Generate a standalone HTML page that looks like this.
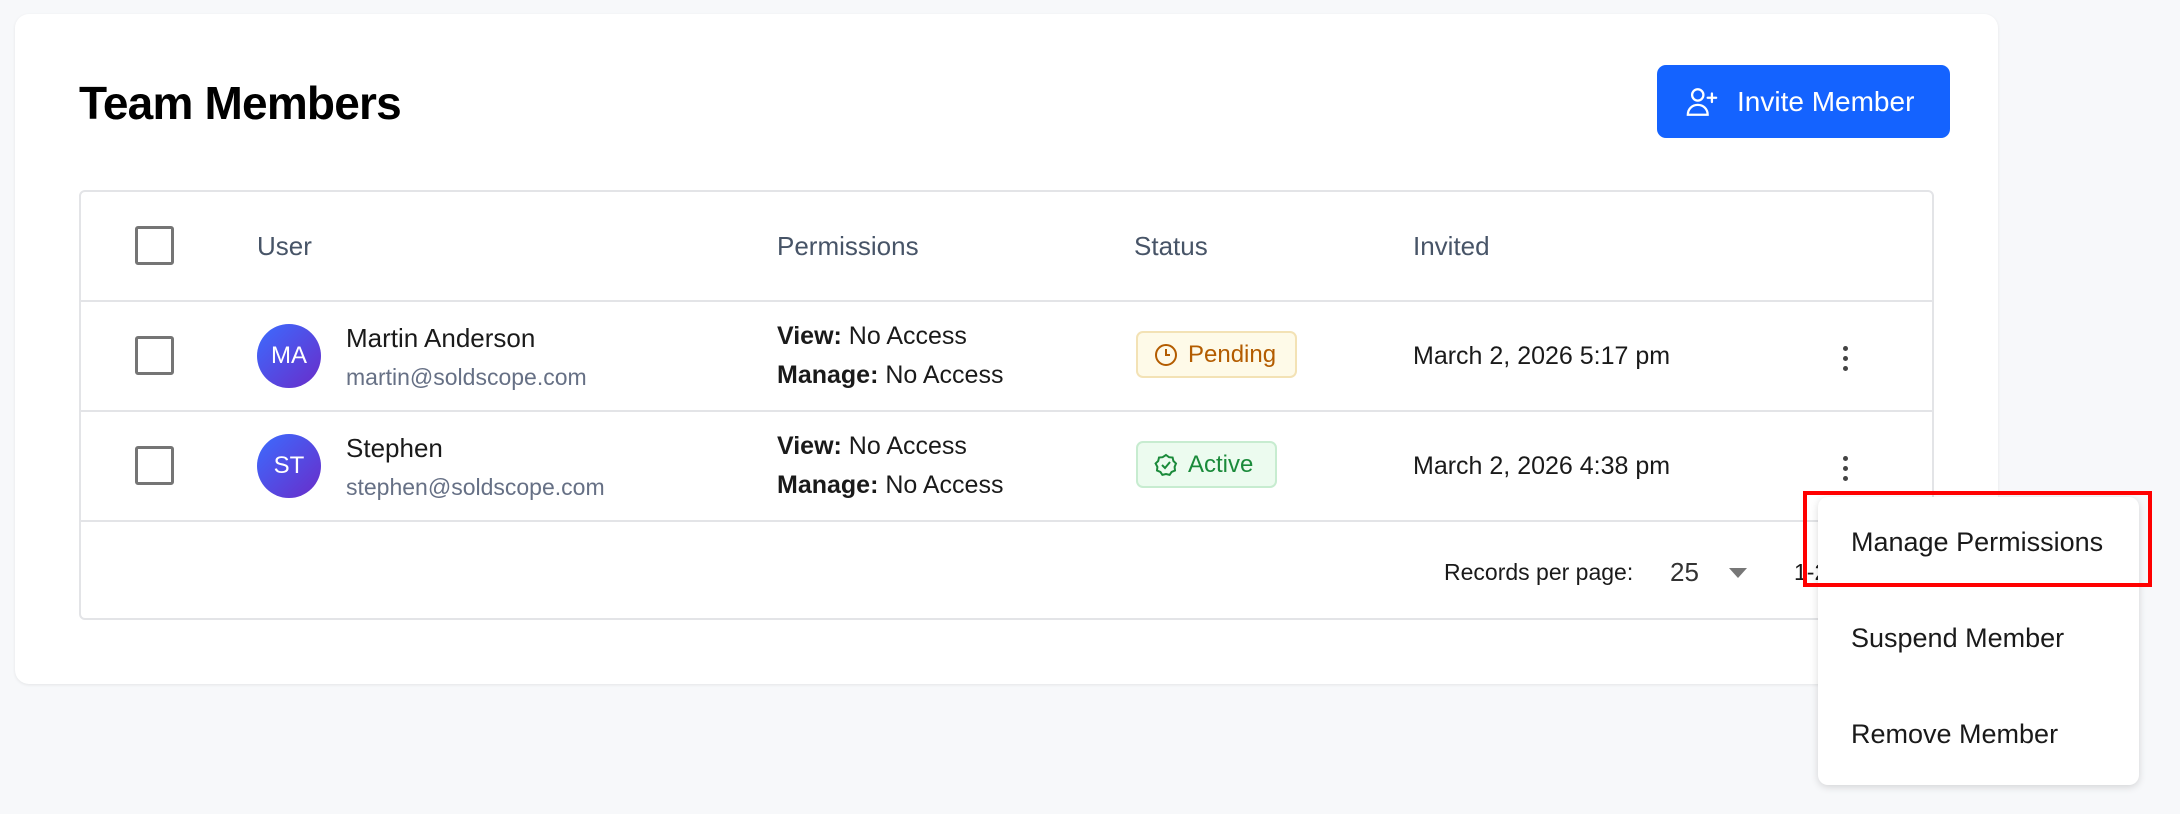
<!DOCTYPE html>
<html><head><meta charset="utf-8"><style>
*{box-sizing:border-box;margin:0;padding:0}
body{width:2180px;height:814px;background:#f7f8fa;font-family:"Liberation Sans",sans-serif;color:#1a1a1a;position:relative;overflow:hidden}
.card{position:absolute;left:15px;top:14px;width:1983px;height:670px;background:#fff;border-radius:14px;box-shadow:0 1px 3px rgba(0,0,0,.08)}
.abs{position:absolute}
h1{position:absolute;font-size:46px;font-weight:bold;color:#000;letter-spacing:-0.8px}
.btn{position:absolute;width:293px;height:73px;background:#1463ff;border-radius:9px;color:#fff;font-size:28px;display:flex;align-items:center;padding-left:28px}
.btn svg{margin-right:18px}
.table{position:absolute;left:79px;top:190px;width:1855px;height:430px;border:2px solid #e3e4e7;border-radius:6px;background:#fff}
.hl{position:absolute;left:0;width:100%;height:2px;background:#e3e4e7}
.cb{position:absolute;width:39px;height:39px;border:3px solid #757575;border-radius:3px}
.th{position:absolute;font-size:26px;color:#475467;top:39px}
.t{position:absolute;font-size:26px;white-space:nowrap}
.em{position:absolute;font-size:23px;color:#667085;white-space:nowrap}
.av{position:absolute;width:64px;height:64px;border-radius:50%;background:linear-gradient(135deg,#3b6cff,#6a2cc9);color:#fff;font-size:24px;display:flex;align-items:center;justify-content:center}
.badge{position:absolute;height:47px;border-radius:7px;font-size:24px;display:flex;align-items:center;padding-left:16px;gap:10px}
.dots{position:absolute;width:6px}
.dots i{display:block;width:5px;height:5px;border-radius:50%;background:#444;margin-bottom:5px}
.menu{position:absolute;left:1818px;top:497px;width:321px;height:288px;background:#fff;border-radius:10px;box-shadow:0 2px 8px rgba(0,0,0,.15)}
.mi{position:absolute;left:33px;font-size:27px;color:#1a1a1a}
.red{position:absolute;left:1803px;top:491px;width:349px;height:96px;border:4px solid #ff0000}
</style></head><body>
<div class="card">
<h1 style="left:64px;top:62px">Team Members</h1>
<div class="btn" style="left:1642px;top:51px"><svg width="34" height="34" viewBox="0 0 24 24" fill="none" stroke="#fff" stroke-width="1.6" stroke-linecap="round"><circle cx="9" cy="7" r="4"/><path d="M2 21c0-4 3-7 7-7s7 3 7 7z"/><path d="M19 6v6M16 9h6"/></svg>Invite Member</div>
</div>
<div class="table">
 <div class="cb" style="left:54px;top:34px"></div>
 <div class="th" style="left:176px">User</div>
 <div class="th" style="left:696px">Permissions</div>
 <div class="th" style="left:1053px">Status</div>
 <div class="th" style="left:1332px">Invited</div>
 <div class="hl" style="top:108px"></div>
 <div class="cb" style="left:54px;top:144px"></div>
 <div class="av" style="left:176px;top:132px">MA</div>
 <div class="t" style="left:265px;top:131px">Martin Anderson</div>
 <div class="em" style="left:265px;top:172px">martin@soldscope.com</div>
 <div class="t" style="left:696px;top:130px;font-size:25px"><b>View:</b> No Access</div>
 <div class="t" style="left:696px;top:169px;font-size:25px"><b>Manage:</b> No Access</div>
 <div class="badge" style="left:1055px;top:139px;width:161px;background:#fefae8;border:2px solid #f3e2b5;color:#b35c00"><svg width="24" height="24" viewBox="0 0 24 24" fill="none" stroke="#b35c00" stroke-width="2"><circle cx="12" cy="12" r="10"/><path d="M12 6v6h4"/></svg>Pending</div>
 <div class="t" style="left:1332px;top:150px;font-size:25px">March 2, 2026 5:17 pm</div>
 <div class="dots" style="left:1762px;top:154px"><i></i><i></i><i></i></div>
 <div class="hl" style="top:218px"></div>
 <div class="cb" style="left:54px;top:254px"></div>
 <div class="av" style="left:176px;top:242px">ST</div>
 <div class="t" style="left:265px;top:241px">Stephen</div>
 <div class="em" style="left:265px;top:282px">stephen@soldscope.com</div>
 <div class="t" style="left:696px;top:240px;font-size:25px"><b>View:</b> No Access</div>
 <div class="t" style="left:696px;top:279px;font-size:25px"><b>Manage:</b> No Access</div>
 <div class="badge" style="left:1055px;top:249px;width:141px;background:#ecfbef;border:2px solid #c7ecd0;color:#1a8a3a"><svg width="24" height="24" viewBox="0 0 24 24" fill="none" stroke="#1a8a3a" stroke-width="2"><path d="M12 2l3 2.2 3.6.3.8 3.5 2.6 2.5-1.4 3.4.4 3.6-3.4 1.4-2 3-3.6-.9-3.6.9-2-3-3.4-1.4.4-3.6L1.6 10.5 4.2 8 5 4.5l3.6-.3z"/><path d="M8 12l3 3 5-6"/></svg>Active</div>
 <div class="t" style="left:1332px;top:260px;font-size:25px">March 2, 2026 4:38 pm</div>
 <div class="dots" style="left:1762px;top:264px"><i></i><i></i><i></i></div>
 <div class="hl" style="top:328px"></div>
 <div class="t" style="left:1363px;top:367px;font-size:23px">Records per page:</div>
 <div class="t" style="left:1589px;top:365px;font-size:26px;color:#333">25</div>
 <div class="abs" style="left:1648px;top:376px;width:0;height:0;border-left:9px solid transparent;border-right:9px solid transparent;border-top:10px solid #777"></div>
 <div class="t" style="left:1713px;top:367px;font-size:23px">1-2</div>
</div>
<div class="menu">
 <div class="mi" style="top:30px">Manage Permissions</div>
 <div class="mi" style="top:126px">Suspend Member</div>
 <div class="mi" style="top:222px">Remove Member</div>
</div>
<div class="red"></div>
</body></html>
